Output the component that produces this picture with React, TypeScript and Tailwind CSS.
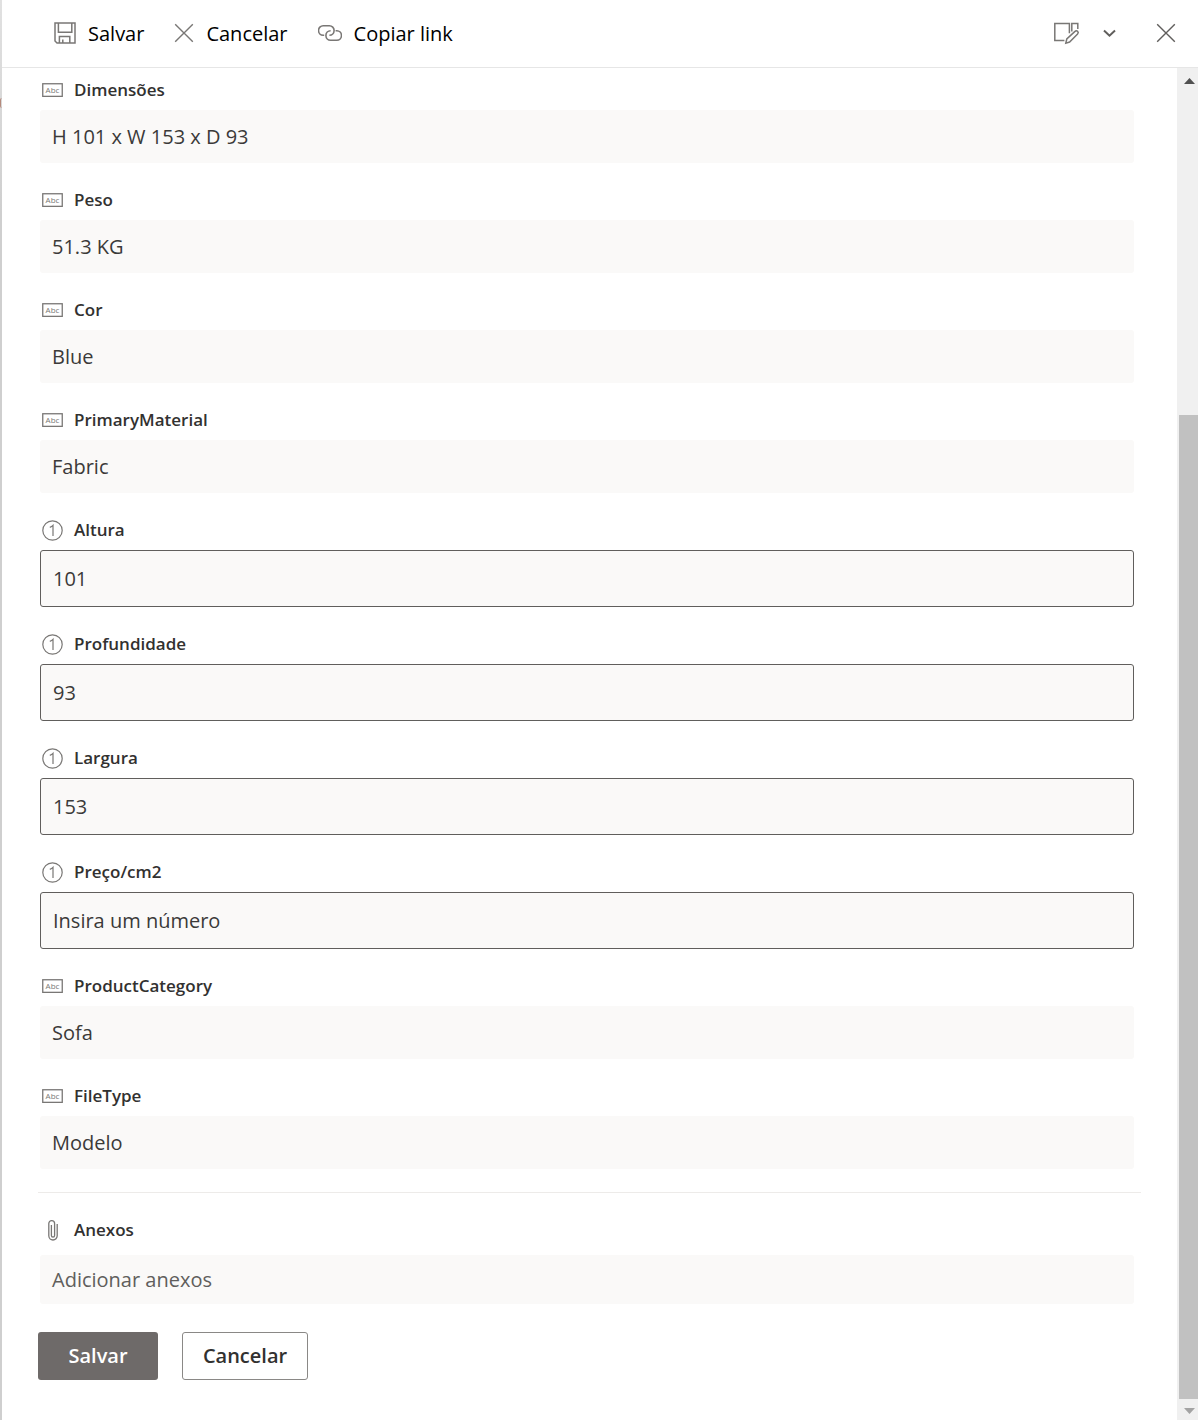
import { useState } from 'react';
import type { ReactNode } from 'react';
import { clsx } from 'clsx';

type Field = {
  id: string;
  label: string;
  type: 'text' | 'number';
  value: string;
  placeholder?: string;
};

const fields: Field[] = [
  { id: 'dimensoes', label: 'Dimensões', type: 'text', value: 'H 101 x W 153 x D 93' },
  { id: 'peso', label: 'Peso', type: 'text', value: '51.3 KG' },
  { id: 'cor', label: 'Cor', type: 'text', value: 'Blue' },
  { id: 'material', label: 'PrimaryMaterial', type: 'text', value: 'Fabric' },
  { id: 'altura', label: 'Altura', type: 'number', value: '101' },
  { id: 'profundidade', label: 'Profundidade', type: 'number', value: '93' },
  { id: 'largura', label: 'Largura', type: 'number', value: '153' },
  { id: 'preco', label: 'Preço/cm2', type: 'number', value: '', placeholder: 'Insira um número' },
  { id: 'categoria', label: 'ProductCategory', type: 'text', value: 'Sofa' },
  { id: 'filetype', label: 'FileType', type: 'text', value: 'Modelo' },
];

function SaveIcon() {
  return (
    <svg width="22" height="24" viewBox="0 0 22 24" fill="none" stroke="#797775" strokeWidth="1.5">
      <path d="M1 1h20v20H3l-2-2z" />
      <path d="M4.4 1v9.3h13.4V1" />
      <path d="M5.4 21v-6.4h10.4V21M8.8 21v-3.6" />
    </svg>
  );
}

function CloseIcon({ color }: { color: string }) {
  return (
    <svg width="20" height="22" viewBox="0 0 20 22" fill="none" stroke={color} strokeWidth="1.4">
      <path d="M1.2 1.2l17.6 17.6M18.8 1.2L1.2 18.8" />
    </svg>
  );
}

function LinkIcon() {
  return (
    <svg width="24" height="18" viewBox="0 0 24 18" fill="none" stroke="#797775" strokeWidth="1.6">
      <path d="M6.2 10.2H5.2A4.7 4.7 0 0 1 5.2 .8h6.2a4.7 4.7 0 0 1 0 9.4" />
      <path d="M17.6 5.8h1.2a4.7 4.7 0 0 1 0 9.4h-6.2a4.7 4.7 0 0 1 0-9.4" />
    </svg>
  );
}

function EditFormIcon() {
  return (
    <svg width="27" height="24" viewBox="1 0 27 24" fill="none" stroke="#797775" strokeWidth="1.5">
      <path d="M11.4 18.6H1.8V1.5h14.6v9.7" />
      <path d="M18.8 9.4V1.5h6v5.6" />
      <path d="M12.8 21.2l1-4.2 8.2-7.6a1.8 1.8 0 0 1 2.6 2.6l-8 8z" />
    </svg>
  );
}

function TextFieldIcon() {
  return (
    <svg width="21" height="15" viewBox="0 0 21 15" aria-hidden="true">
      <rect x="0.75" y="0.75" width="19.5" height="12.6" fill="none" stroke="#797775" strokeWidth="1.3" />
      <text x="10.5" y="10" textAnchor="middle" fontSize="8" fontWeight="400" fill="#797775">Abc</text>
    </svg>
  );
}

function NumberFieldIcon() {
  return (
    <svg width="21" height="21" viewBox="0 0 21 21" fill="none" stroke="#797775" strokeWidth="1.2" aria-hidden="true">
      <circle cx="10.5" cy="10.5" r="9.7" />
      <path d="M7.8 7.4c1.4-.4 2.4-1 3.2-2V16" />
    </svg>
  );
}

function ClipIcon() {
  return (
    <svg width="21" height="21" viewBox="0 0 21 21" fill="none" stroke="#797775" strokeWidth="1.3" aria-hidden="true">
      <path d="M15.2 4v11.8a4.2 4.2 0 0 1-8.4 0V3.6a2.9 2.9 0 0 1 5.8 0v11.8a1.6 1.6 0 0 1-3.2 0V5" />
    </svg>
  );
}

function CommandButton({ icon, children }: { icon: ReactNode; children: ReactNode }) {
  return (
    <button type="button" className="flex items-center gap-3 text-xl text-black">
      {icon}
      <span>{children}</span>
    </button>
  );
}

function FieldLabel({ htmlFor, icon, children }: { htmlFor: string; icon: ReactNode; children: ReactNode }) {
  return (
    <label htmlFor={htmlFor} className="flex h-6 items-center gap-[11px] pl-0.5 text-[17px] font-semibold text-[#323130]">
      {icon}
      <span>{children}</span>
    </label>
  );
}

function ScrollBar() {
  return (
    <div className="flex w-[21px] shrink-0 flex-col bg-[#f0f0f0]" aria-hidden="true">
      <svg className="h-[21px] w-full" viewBox="0 0 21 21">
        <path d="M7 16l5.5-6 5.5 6z" fill="#505050" />
      </svg>
      <div className="flex-[326]" />
      <div className="ml-0.5 flex-[984] bg-[#c1c1c1]" />
      <svg className="h-[21px] w-full" viewBox="0 0 21 21">
        <path d="M7 9l5.5 6L18 9z" fill="#a3a3a3" />
      </svg>
    </div>
  );
}

export default function App() {
  const [values, setValues] = useState<Record<string, string>>(() =>
    Object.fromEntries(fields.map((f) => [f.id, f.value]))
  );

  return (
    <div className="flex min-h-screen bg-white font-['Open_Sans','Noto_Sans',sans-serif]">
      {/* Edge of the list behind the panel */}
      <div className="w-0.5 shrink-0 bg-linear-to-b from-[#e1e1e1] to-[#cfcfcf] to-15% pt-[98px]">
        <div className="h-2.5 rounded-l-full border-l border-[#b58a7c]" />
      </div>

      <div className="flex min-w-0 flex-1 flex-col">
        <header className="flex h-[68px] items-center justify-between border-b border-[#e6e6e6] pr-[22px] pl-[52px]">
          <div className="flex items-center gap-[30px]">
            <CommandButton icon={<SaveIcon />}>Salvar</CommandButton>
            <CommandButton icon={<CloseIcon color="#797775" />}>Cancelar</CommandButton>
            <CommandButton icon={<LinkIcon />}>Copiar link</CommandButton>
          </div>
          <div className="flex items-center">
            <button type="button" aria-label="Editar formulário" className="flex items-center gap-[22px]">
              <EditFormIcon />
              <svg width="13" height="10" viewBox="0 0 13 10" fill="none" stroke="#605e5c" strokeWidth="2">
                <path d="M1 1.5l5.5 5.2L12 1.5" />
              </svg>
            </button>
            <button type="button" aria-label="Fechar" className="ml-10">
              <CloseIcon color="#605e5c" />
            </button>
          </div>
        </header>

        <div className="flex flex-1">
          <form className="min-w-0 flex-1 px-9 pt-2.5 pb-10" onSubmit={(e) => e.preventDefault()}>
            <div className="mr-[7px] ml-0.5 flex flex-col gap-[25px]">
              {fields.map((field) => (
                <div key={field.id} className="flex flex-col gap-2">
                  <FieldLabel htmlFor={field.id} icon={field.type === 'text' ? <TextFieldIcon /> : <NumberFieldIcon />}>
                    {field.label}
                  </FieldLabel>
                  <input
                    id={field.id}
                    type="text"
                    inputMode={field.type === 'number' ? 'decimal' : 'text'}
                    value={values[field.id]}
                    placeholder={field.placeholder}
                    onChange={(e) => setValues({ ...values, [field.id]: e.target.value })}
                    className={clsx(
                      'w-full rounded-[3px] bg-[#faf9f8] px-3 text-xl text-[#3b3a39] outline-none placeholder:text-[#3b3a39]',
                      field.type === 'number' ? 'h-[57px] border border-[#605e5c]' : 'h-[53px]'
                    )}
                  />
                </div>
              ))}
            </div>

            <hr className="mt-[23px] border-[#edebe9]" />

            <div className="mt-[25px] mr-[7px] ml-0.5 flex flex-col gap-[13px]">
              <FieldLabel htmlFor="anexos" icon={<ClipIcon />}>
                Anexos
              </FieldLabel>
              <button id="anexos" type="button" className="h-[49px] rounded-[3px] bg-[#faf9f8] px-3 text-left text-xl text-[#605e5c]">
                Adicionar anexos
              </button>
            </div>

            <div className="mt-7 flex gap-6">
              <button type="submit" className="h-12 w-[120px] rounded-[3px] bg-[#6e6a69] text-xl font-semibold text-white">
                Salvar
              </button>
              <button type="button" className="h-12 w-[126px] rounded-[3px] border border-[#8a8886] bg-white text-xl font-semibold text-[#323130]">
                Cancelar
              </button>
            </div>
          </form>

          <ScrollBar />
        </div>
      </div>
    </div>
  );
}
